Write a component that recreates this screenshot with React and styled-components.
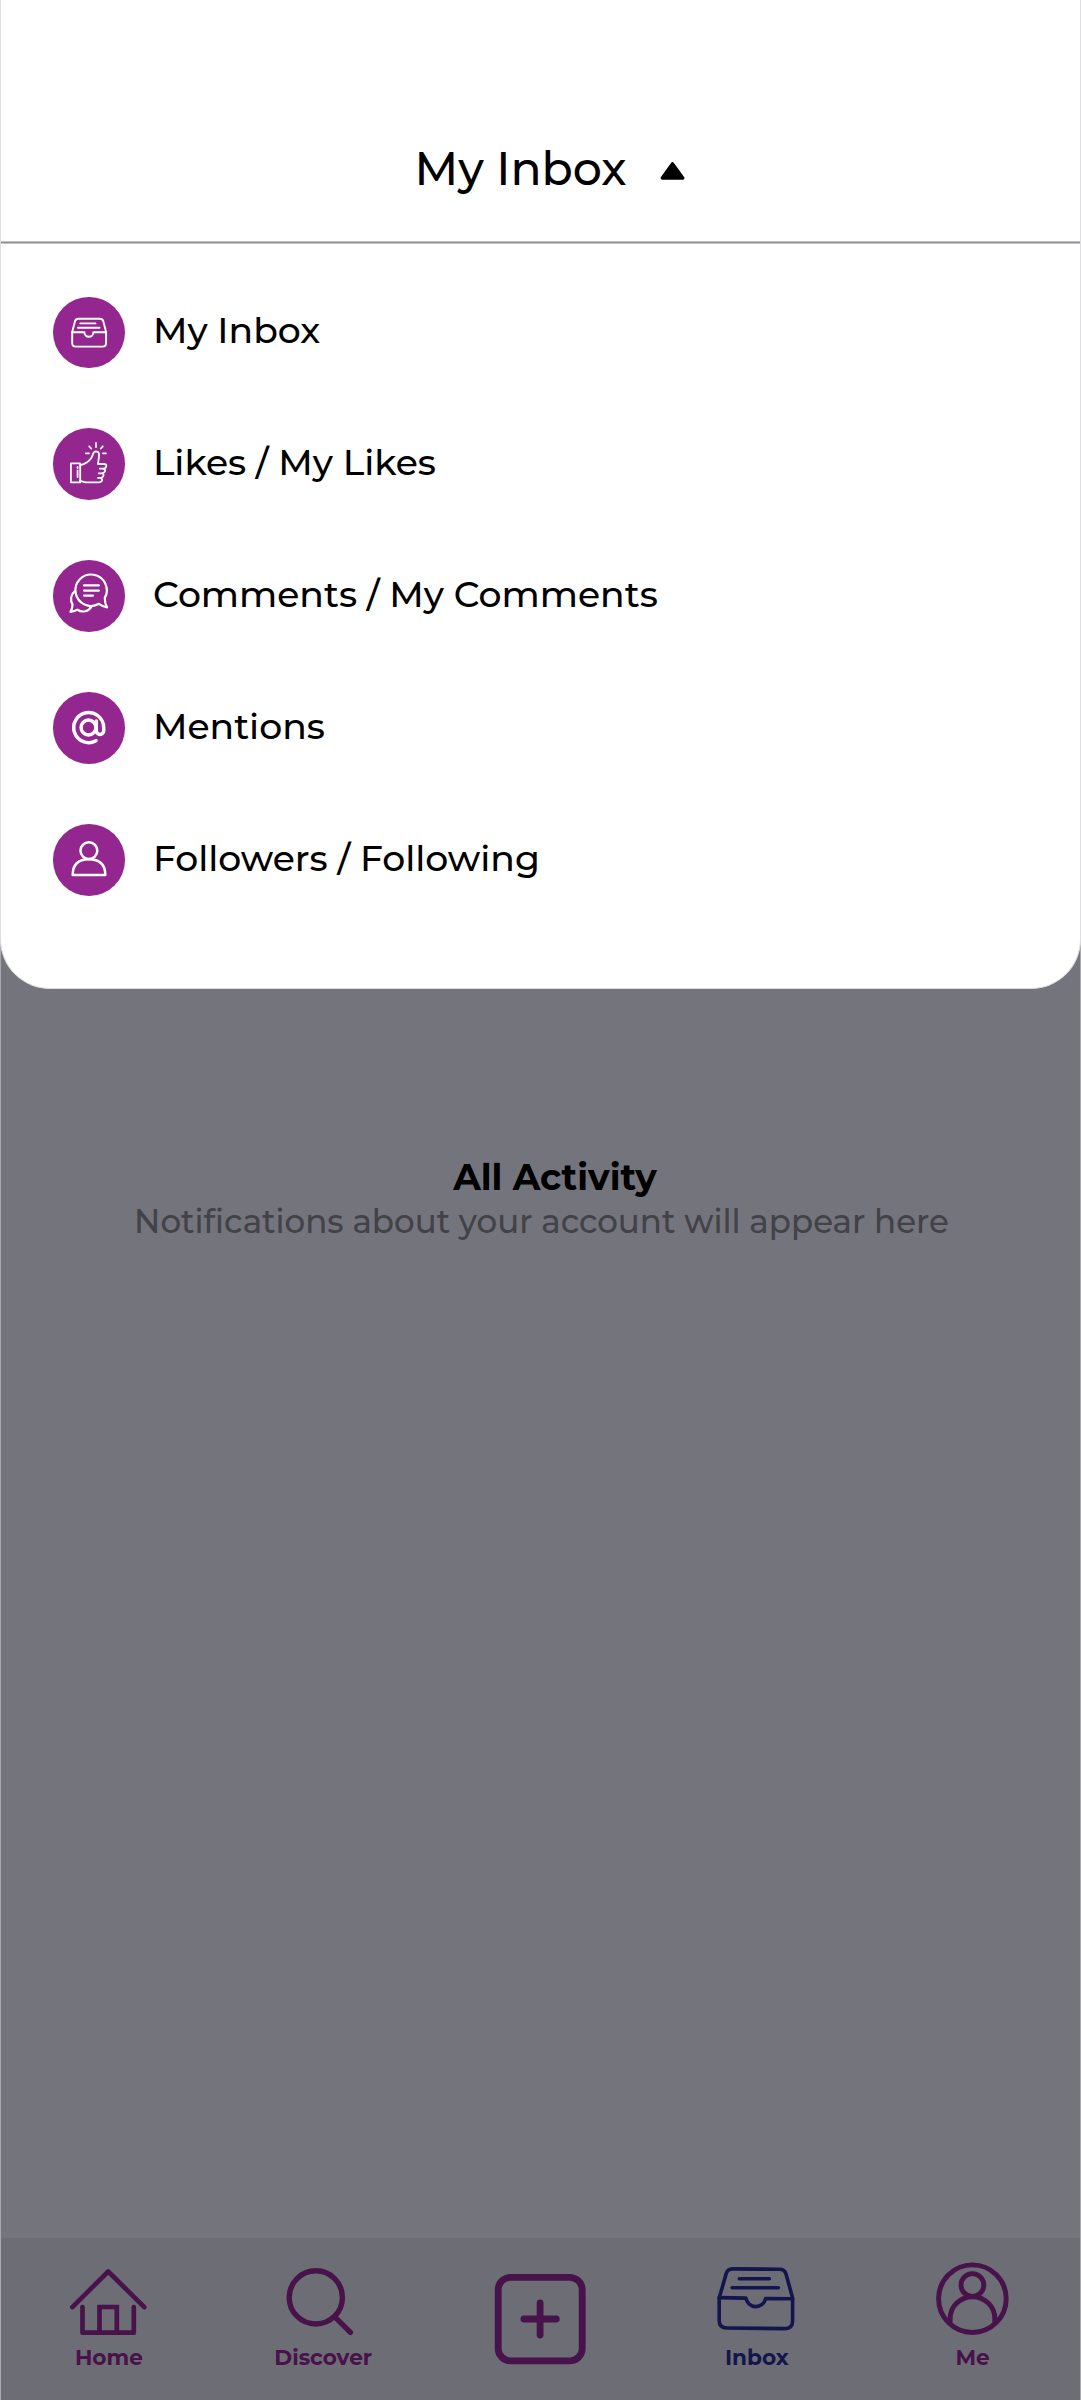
import React from "react";
import styled, { createGlobalStyle } from "styled-components";

const GlobalStyle = createGlobalStyle`
  *, *::before, *::after { box-sizing: border-box; }
  body { margin: 0; background: #74747d; }
`;

const Screen = styled.div`
  display: flex;
  flex-direction: column;
  width: 100%;
  height: 2400px;
  background: #74747d;
  border: solid #a9a9ae;
  border-width: 0 1px;
  font-family: Montserrat, Inter, "Open Sans", sans-serif;
  color: #000;
`;

const Panel = styled.section`
  flex: none;
  height: 989px;
  margin: 0 -1px;
  background: #fff;
  border: 1px solid #dedee0;
  border-top: 0;
  border-radius: 0 0 50px 50px;
`;

const PanelHeader = styled.header`
  display: flex;
  justify-content: center;
  align-items: center;
  gap: 34px;
  height: 241px;
  padding: 96px 0 0 19px;
`;

const Title = styled.h1`
  margin: 0;
  font-size: 45.8px;
  line-height: 60px;
  font-weight: 500;
`;

const Caret = styled.svg`
  width: 25px;
  height: 20px;
  margin-top: 5px;
`;

const Divider = styled.div`
  height: 3px;
  background: #8f8f8f;
  border: solid #c4c4c4;
  border-width: 1px 0;
`;

const Menu = styled.ul`
  display: flex;
  flex-direction: column;
  gap: 60.4px;
  margin: 0;
  padding: 52.5px 52.3px 0;
  list-style: none;
`;

const MenuRow = styled.li`
  display: flex;
  align-items: center;
  gap: 28px;
`;

const Badge = styled.span`
  display: flex;
  flex: none;
  width: 71.6px;
  height: 71.6px;
  border-radius: 50%;
  background: #93278f;
`;

const Glyph = styled.svg`
  width: 100%;
  height: 100%;
  fill: none;
  stroke: #fff;
  stroke-width: ${(p) => p.$weight}px;
  stroke-linecap: round;
  stroke-linejoin: round;
`;

const MenuLabel = styled.span`
  padding-bottom: 5px;
  font-size: 36.15px;
  line-height: 48px;
  font-weight: 500;
`;

const Activity = styled.main`
  display: flex;
  flex: 1;
  flex-direction: column;
  align-items: center;
  padding-top: 165px;
`;

const ActivityTitle = styled.h2`
  margin: 0;
  padding-left: 29px;
  font-size: 36px;
  line-height: 46px;
  font-weight: 700;
`;

const ActivityText = styled.p`
  margin: 0;
  padding-left: 2px;
  font-size: 32.5px;
  line-height: 43px;
  font-weight: 500;
  color: #424247;
`;

const NavBar = styled.nav`
  display: grid;
  grid-template-columns: repeat(5, 1fr);
  flex: none;
  height: 162px;
  margin: 0 -1px;
  padding-top: 10px;
  background: #6d6d75;
  border: solid #a9a9ae;
  border-width: 0 1px;
`;

const NavItem = styled.div`
  display: flex;
  flex-direction: column;
  align-items: center;
  color: ${(p) => (p.$active ? "#14154c" : "#48124a")};
`;

const NavIcon = styled.svg`
  width: 96px;
  height: ${(p) => (p.$tall ? 120 : 96)}px;
  fill: none;
  stroke: currentColor;
  stroke-width: ${(p) => p.$weight}px;
  stroke-linecap: round;
  stroke-linejoin: round;
`;

const NavLabel = styled.span`
  margin-left: ${(p) => p.$shift || 0}px;
  font-size: 21.6px;
  line-height: 27px;
  font-weight: 700;
`;

const menu = [
  {
    label: "My Inbox",
    weight: 1.9,
    icon: (
      <>
        <path d="M19.2 35 L22 24.3 Q22.7 21.7 25.3 21.7 H47 Q49.6 21.7 50.3 24.3 L53.1 35 V46 Q53.1 49.6 49.5 49.6 H22.8 Q19.2 49.6 19.2 46 Z" />
        <path d="M19.2 35.3 H31.4 A4.5 4.5 0 0 0 40.4 35.3 H53.1" />
        <path d="M27.3 26.4 H42.5 M25 30.8 H46.5" />
      </>
    ),
  },
  {
    label: "Likes / My Likes",
    weight: 1.8,
    icon: (
      <>
        <path d="M17.9 35.3 H27.2 V54.4 H17.9 Z M24.6 39 V40 M24.6 42.5 V49" />
        <path d="M27.2 37.2 C33.5 35.7 36 33.5 38.3 30 C40.7 26.2 39.5 23.4 43 23.3 C46 23.3 46.4 26 45.9 29.2 L45 36 H51 Q53.5 36 53.3 38 Q53 40.6 50.5 40.6 Q53 41.6 51.8 43.7 Q51 45.3 49 45.3 Q51.3 46.3 50.2 48.4 Q49.4 49.8 47.7 49.9 Q49.9 51.2 48.8 53 Q48 54.3 45.8 54.3 H32.5 L27.2 52.8" />
        <path d="M46.8 40.6 H50.5 M45.7 45.3 H49 M45 49.9 H47.7" />
        <path d="M43 14.9 V19 M36.2 18.3 L38.2 20.5 M49.8 18.3 L47.8 20.5 M32.9 25.3 H36 M49.9 25.3 H53" />
      </>
    ),
  },
  {
    label: "Comments / My Comments",
    weight: 2.2,
    icon: (
      <>
        <path d="M51.8 37.9 A15.7 15.7 0 1 0 46 43.8 Q50 46.8 54 47.3 Q51.7 43.5 51.8 37.9 Z" />
        <path d="M21.6 31.5 C17.6 34.5 17 40.5 19.6 44.6 Q19.2 49 17.5 51.8 Q21.7 51.6 24.4 49.7 C29.5 52.9 35.5 51.8 38.6 46.4" />
        <path d="M31 25.4 H46 M31 30.6 H46 M31 35.6 H40" />
      </>
    ),
  },
  {
    label: "Mentions",
    weight: 3.5,
    icon: (
      <>
        <circle cx="35.5" cy="35.5" r="7.4" />
        <path d="M43.3 29 V38.7 A3.7 3.7 0 0 0 50.7 38.7 V35.4 A15 15 0 1 0 43 48.7" />
      </>
    ),
  },
  {
    label: "Followers / Following",
    weight: 2.5,
    icon: (
      <>
        <circle cx="35.9" cy="26.7" r="8.4" />
        <path d="M19.7 51.1 C19.7 40 26 35.2 35.9 35.2 C45.8 35.2 52.3 40 52.3 51.1 Z" />
      </>
    ),
  },
];

const tabs = [
  {
    label: "Home",
    weight: 4.7,
    icon: (
      <>
        <path d="M11.4 59.1 L47.2 23.5 L83.3 59.1" />
        <path d="M21.5 59 V84.7 H72.8 V59" />
        <path strokeLinejoin="miter" d="M38.5 84.7 V59 H55.8 V84.7" />
      </>
    ),
  },
  {
    label: "Discover",
    shift: -3,
    weight: 5.4,
    icon: (
      <>
        <circle cx="38.8" cy="49.4" r="26.6" />
        <path d="M58.5 69.7 L73.4 84.4" />
      </>
    ),
  },
  {
    name: "Create",
    weight: 6.8,
    tall: true,
    icon: (
      <>
        <rect x="6.2" y="29.3" width="84" height="83.6" rx="12.5" />
        <path d="M31.9 71 H64.3 M48.1 54.9 V87.1" />
      </>
    ),
  },
  {
    label: "Inbox",
    shift: 1,
    active: true,
    weight: 3.6,
    icon: (
      <>
        <path d="M11.2 50 L18.2 25.6 Q19.6 20.9 24.5 20.9 L71.5 21.3 Q76.6 21.3 78 26 L84.6 50 V73 Q84.6 80.6 77 80.6 L18.8 80 Q11.2 80 11.2 72.5 Z" />
        <path d="M11.2 49.6 L37.9 50.1 A10 10 0 0 0 57.6 50.5 L84.6 50.7" />
        <path d="M31.3 30.8 H61.3 M24.1 39.8 H70.4" />
      </>
    ),
  },
  {
    label: "Me",
    shift: 1,
    weight: 4.9,
    icon: (
      <>
        <circle cx="48.4" cy="50.7" r="33.8" />
        <circle cx="48.4" cy="37" r="11.4" />
        <path d="M26.2 73.5 V70.5 A22.3 21.8 0 0 1 70.8 70.5 V73.5" />
      </>
    ),
  },
];

export default function App() {
  return (
    <>
      <GlobalStyle />
      <Screen>
        <Panel>
          <PanelHeader>
            <Title>My Inbox</Title>
            <Caret viewBox="0 0 25 20">
              <path
                d="M12.5 3 L22.6 17 H2.4 Z"
                stroke="#000"
                strokeWidth="3.6"
                strokeLinejoin="round"
              />
            </Caret>
          </PanelHeader>
          <Divider />
          <Menu>
            {menu.map((item) => (
              <MenuRow key={item.label}>
                <Badge>
                  <Glyph viewBox="0 0 71.6 71.6" $weight={item.weight}>
                    {item.icon}
                  </Glyph>
                </Badge>
                <MenuLabel>{item.label}</MenuLabel>
              </MenuRow>
            ))}
          </Menu>
        </Panel>
        <Activity>
          <ActivityTitle>All Activity</ActivityTitle>
          <ActivityText>Notifications about your account will appear here</ActivityText>
        </Activity>
        <NavBar>
          {tabs.map((tab) => (
            <NavItem key={tab.label || tab.name} $active={tab.active}>
              <NavIcon
                viewBox={tab.tall ? "0 0 96 120" : "0 0 96 96"}
                $tall={tab.tall}
                $weight={tab.weight}
              >
                {tab.icon}
              </NavIcon>
              {tab.label && <NavLabel $shift={tab.shift}>{tab.label}</NavLabel>}
            </NavItem>
          ))}
        </NavBar>
      </Screen>
    </>
  );
}
